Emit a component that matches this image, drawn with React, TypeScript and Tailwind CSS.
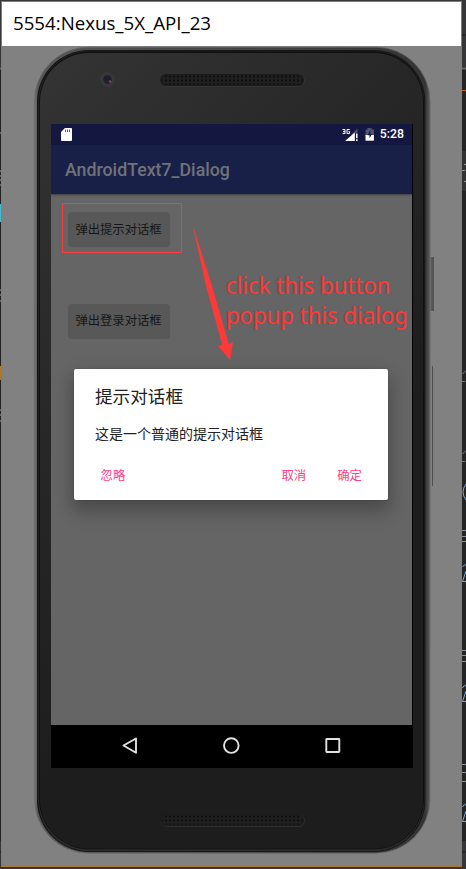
import React from 'react';

const cjk = "font-['Noto_Sans_CJK_SC',sans-serif]";

function Speaker({ id, className }: { id: string; className: string }) {
  return (
    <svg width="148" height="14" viewBox="0 0 148 14" className={className}>
      <defs>
        <pattern id={id} width="4" height="4" patternUnits="userSpaceOnUse" patternTransform="translate(1 1.5)">
          <rect width="4" height="4" fill="#202020" />
          <rect x="1" y="1" width="2" height="2" fill="#0e0e0e" />
        </pattern>
      </defs>
      <rect x="1.5" y="1.5" width="144" height="12" rx="6" fill="none" stroke="#3c3c3c" strokeWidth="0.6" />
      <rect x="1" y="1" width="144" height="12" rx="6" fill="#1b1b1b" />
      <rect x="3" y="2.5" width="140" height="9" rx="4.5" fill={`url(#${id})`} />
    </svg>
  );
}

function StatusBar() {
  return (
    <div className="flex h-[21px] shrink-0 items-center bg-[#141840] pl-[10px] pr-2">
      <svg width="11" height="13" viewBox="0 0 11 13">
        <path d="M4 0H10Q11 0 11 1V12Q11 13 10 13H1Q0 13 0 12V4Z" fill="#fff" />
        <path d="M4.5 1.5V4M6.5 1.5V4M8.5 1.5V4" stroke="#555a70" strokeWidth="1" />
      </svg>
      <svg width="16" height="14" viewBox="0 0 16 14" className="ml-auto">
        <path d="M0.5 1.5H3V5.5H0.5M1 3.5H3M7.7 1.5H5V5.5H7.5V3.5H6.5" fill="none" stroke="#fff" strokeWidth="1" />
        <path d="M15.5 0.5V5H13V8L9 7Z" fill="#4c506e" />
        <path d="M3 13L12.8 4.5V13Z" fill="#fff" />
        <path d="M14.8 5.5V10.3M14.8 11.3V13" stroke="#fff" strokeWidth="1.5" />
      </svg>
      <svg width="9" height="13" viewBox="0 0 9 13" className="ml-[7px]">
        <path d="M0.5 1.5H2.5V0H6.5V1.5H8.9V8H0.5Z" fill="#50546f" />
        <path d="M0.5 7H8.9V12.7H0.5Z" fill="#fff" />
        <path d="M5.5 2L2.5 7.3H4.5V10.3L7 6H5.2Z" fill="#141840" />
      </svg>
      <span className="ml-[6px] font-[Roboto,sans-serif] text-[12.3px] font-medium leading-none text-white">5:28</span>
    </div>
  );
}

function GrayButton({ children }: { children: string }) {
  return (
    <div className={`${cjk} flex h-[34px] w-[102px] items-center justify-center whitespace-nowrap rounded-sm bg-[#585858] text-[12.3px] leading-none text-[#161616] shadow-[0_1px_1px_rgba(0,0,0,0.14)]`}>
      {children}
    </div>
  );
}

function Dialog() {
  return (
    <div className={`${cjk} absolute left-[23px] top-[245px] flex h-[131px] w-[314px] flex-col rounded-[2px] bg-white pl-[21px] pt-[17px] shadow-[0_9px_18px_2px_rgba(0,0,0,0.28),0_0_2px_rgba(0,0,0,0.2)]`}>
      <div className="text-[17.6px] leading-[20px] text-[#212121]">提示对话框</div>
      <div className="mt-[18px] text-[14px] leading-[18px] text-[#212121]">这是一个普通的提示对话框</div>
      <div className="mt-[24px] flex text-[12.4px] leading-[18px] text-[#ff4081]">
        <span className="ml-[5.5px]">忽略</span>
        <span className="ml-auto">取消</span>
        <span className="ml-[31px] mr-[26px]">确定</span>
      </div>
    </div>
  );
}

function NavBar() {
  return (
    <div className="flex h-[43px] w-[362px] shrink-0 bg-black">
      <svg width="362" height="43" viewBox="0 0 362 43" fill="none" stroke="#e2e2e2" strokeWidth="1.9">
        <path d="M72.5 20.5L85 13.5V27.8Z" strokeLinejoin="round" />
        <circle cx="180.3" cy="20.6" r="7.3" />
        <rect x="275.3" y="14" width="13" height="13" rx="0.5" />
      </svg>
    </div>
  );
}

function Screen() {
  return (
    <div className="absolute left-[51px] top-[78px] flex h-[644px] w-[362px] flex-col bg-black">
      <div className="relative flex h-[601px] w-[361px] flex-col overflow-hidden bg-[#656565]">
        <StatusBar />
        <div className="flex h-[49px] shrink-0 items-center bg-[#192047] pl-[14px] pt-[3px] font-[Roboto,sans-serif] text-[17.75px] font-medium leading-none text-[#70727b] shadow-[0_1px_2px_rgba(0,0,0,0.4)]">
          AndroidText7_Dialog
        </div>
        <div className="flex flex-col items-start gap-[57.5px] pl-[16.5px] pt-[18px]">
          <GrayButton>弹出提示对话框</GrayButton>
          <GrayButton>弹出登录对话框</GrayButton>
        </div>
        <Dialog />
      </div>
      <NavBar />
    </div>
  );
}

function PhoneBody() {
  return (
    <svg width="460" height="820" viewBox="2 46 460 820" className="absolute inset-y-0 left-[2px]">
      <defs>
        <linearGradient id="rim" x1="0" x2="1" y1="0" y2="0">
          <stop offset="0" stopColor="#7b7979" />
          <stop offset="0.008" stopColor="#565656" />
          <stop offset="0.5" stopColor="#454545" />
          <stop offset="0.988" stopColor="#353334" />
          <stop offset="1" stopColor="#5c5a5b" />
        </linearGradient>
        <linearGradient id="rim-edge" x1="0" x2="0" y1="0" y2="1">
          <stop offset="0" stopColor="#646464" />
          <stop offset="1" stopColor="#6c6b6b" />
        </linearGradient>
        <linearGradient id="face" x1="0" x2="0.5" y1="0" y2="1">
          <stop offset="0" stopColor="#343434" />
          <stop offset="0.4" stopColor="#272727" />
          <stop offset="0.75" stopColor="#1d1d1e" />
          <stop offset="1" stopColor="#1d1d1d" />
        </linearGradient>
      </defs>
      <path d="M430.5 257H433.5V311H430.5Z" fill="#5a5a5a" />
      <path d="M433.3 257V311M432.5 366V486" stroke="#484848" strokeWidth="0.9" />
      <rect x="34.5" y="47.2" width="395.5" height="806" rx="54" fill="url(#rim)" stroke="url(#rim-edge)" strokeWidth="0.8" />
      <rect x="37" y="50" width="388.3" height="802" rx="52" fill="#141414" />
      <rect x="38.3" y="50.8" width="386" height="800.4" rx="51" fill="#2b2b2b" />
      <rect x="39" y="51.3" width="385" height="798" rx="50.5" fill="#101010" />
      <rect x="40" y="53" width="383" height="795.5" rx="49" fill="url(#face)" />
      <circle cx="107.5" cy="79.5" r="7.5" fill="#373737" />
      <circle cx="107.5" cy="79.5" r="4.2" fill="#20202a" />
      <circle cx="110" cy="81.5" r="1.3" fill="#6b4a56" />
    </svg>
  );
}

function EditorEdges() {
  return (
    <svg width="466" height="869" viewBox="0 0 466 869" className="absolute inset-0">
      <rect width="466" height="869" fill="#242424" />
      <path d="M0 0H466V2H0ZM462 2H466V67H462ZM0 2H1V67H0ZM0 866H466V869H0ZM0 841H2V869H0ZM462 841H466V869H462Z" fill="#363638" />
      <path d="M462 35H466M462 852H466M0 852H2" stroke="#1b1b1b" />
      <path d="M462 68.5H466M0 68.5H2" stroke="#686868" strokeWidth="2" />
      <path d="M462 90.5H466" stroke="#c86420" />
      <rect x="462" y="151" width="4" height="40" fill="#333" />
      <path d="M464 164.5H466M462 170.5H465M464 181.5H466" stroke="#999" />
      <path d="M0 133H1M0 171H1M0 176H1M0 180H1M0 185H1M0 290H1M0 295H1M0 301H1M0 410H1M0 415H1M0 421H1" stroke="#aaa" />
      <rect y="204" width="1" height="18" fill="#43bfd3" />
      <rect y="366" width="1" height="14" fill="#ae7a1f" />
      <path d="M466 370.5L462.5 374M462 381.5H465M466 450.5L462.5 454M462 461.5H465" stroke="#8a789a" />
      <path d="M466 484Q460 492 466 500" fill="none" stroke="#80a5d5" />
      <path d="M462 530.5H466M462 536.5H466M462 541.5H466M462 650.5H466M462 655.5H466M462 661.5H466M462 764.5H466M462 772.5H466M462 781.5H466" stroke="#8d919d" />
      <path d="M462.5 567Q465 563 466 566M466 571L462.5 581.5H466M462.5 688Q465 683 466 687M466 691L462.5 701.5H466M462.5 807Q465 802 466 806M466 811L462.5 821.5H466" fill="none" stroke="#79a6d8" />
    </svg>
  );
}

function Annotations() {
  return (
    <>
      <div className="absolute left-[62px] top-[203px] h-[50px] w-[120px] border border-[#fa3b3b]" />
      <svg width="50" height="140" viewBox="190 222 50 140" className="absolute left-[190px] top-[222px]">
        <path d="M192.2 223L212 286L228.8 344.3L233 342L230 360L218 346L222.3 345.3L206 286Z" fill="#ff3838" />
      </svg>
      <div className="absolute left-[226px] top-[270px] origin-left scale-x-[0.922] whitespace-nowrap font-['Noto_Sans',sans-serif] text-[24px] leading-[30px] text-[#ff3838] [text-shadow:-1px_0_1px_rgba(90,60,35,0.4)]">
        <div>click this button</div>
        <div>popup this dialog</div>
      </div>
    </>
  );
}

export default function App() {
  return (
    <div className="relative h-[869px] w-[466px] overflow-hidden">
      <EditorEdges />
      <div className="absolute left-px top-px flex h-[866px] w-[461px] flex-col border border-[#af742e] bg-[#818181]">
        <div className="flex h-[44px] shrink-0 items-center bg-white pb-px pl-[11px] font-['Open_Sans',sans-serif] text-[18.7px] leading-none text-black">
          5554:Nexus_5X_API_23
        </div>
      </div>
      <div className="absolute left-0 top-[46px] h-[820px] w-[466px]">
        <PhoneBody />
        <Speaker id="top-grille" className="absolute left-[159px] top-[27px]" />
        <Speaker id="bottom-grille" className="absolute left-[159px] top-[767px]" />
        <Screen />
      </div>
      <Annotations />
    </div>
  );
}
